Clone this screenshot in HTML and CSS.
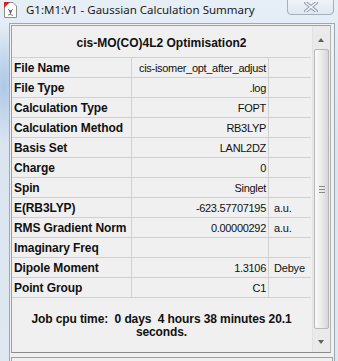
FILE: index.html
```html
<!DOCTYPE html>
<html lang="en">
<head>
    <meta charset="UTF-8">
    <meta name="viewport" content="width=device-width, initial-scale=1.0">
    <title>Gaussian Calculation Summary</title>
    <link rel="stylesheet" href="styles.css">
</head>
<body>
    <div class="window">
        <div class="titlebar">
            <svg class="app-icon" width="15" height="16" viewBox="0 0 15 16">
                <path d="M1.5 0.5 H10 L13.5 4 V15.5 H1.5 Z" fill="#fff" stroke="#8c8c8c"/>
                <path d="M1 0 H7 L1 6 Z" fill="#d42020"/>
                <path d="M5 7 L7.5 9.5 L10 7 M7.5 9.5 V12.5 M5 13 L7.5 12.5 L10 13.5" fill="none" stroke="#7a7a7a" stroke-width="1"/>
                <circle cx="7.5" cy="9.5" r="1.2" fill="#5a5a5a"/>
            </svg>
            <span class="title">G1:M1:V1 - Gaussian Calculation Summary</span>
            <div class="close">
                <svg width="14" height="10" viewBox="0 0 14 10">
                    <path d="M2 1 L12 9 M12 1 L2 9" stroke="#8d99a8" stroke-width="3.4" stroke-linecap="square"/>
                    <path d="M2 1 L12 9 M12 1 L2 9" stroke="#f4f7fa" stroke-width="1.6" stroke-linecap="square"/>
                </svg>
            </div>
        </div>

        <div class="client">
            <div class="panel">
                <div class="sheet">
                    <div class="sheet-title">cis-MO(CO)4L2 Optimisation2</div>
                    <div class="grid">
                        <div class="label">File Name</div>
                        <div class="value">cis-isomer_opt_after_adjust</div>
                        <div class="unit"></div>

                        <div class="label">File Type</div>
                        <div class="value">.log</div>
                        <div class="unit"></div>

                        <div class="label">Calculation Type</div>
                        <div class="value">FOPT</div>
                        <div class="unit"></div>

                        <div class="label">Calculation Method</div>
                        <div class="value">RB3LYP</div>
                        <div class="unit"></div>

                        <div class="label">Basis Set</div>
                        <div class="value">LANL2DZ</div>
                        <div class="unit"></div>

                        <div class="label">Charge</div>
                        <div class="value">0</div>
                        <div class="unit"></div>

                        <div class="label">Spin</div>
                        <div class="value">Singlet</div>
                        <div class="unit"></div>

                        <div class="label">E(RB3LYP)</div>
                        <div class="value">-623.57707195</div>
                        <div class="unit">a.u.</div>

                        <div class="label">RMS Gradient Norm</div>
                        <div class="value">0.00000292</div>
                        <div class="unit">a.u.</div>

                        <div class="label">Imaginary Freq</div>
                        <div class="value"></div>
                        <div class="unit"></div>

                        <div class="label">Dipole Moment</div>
                        <div class="value">1.3106</div>
                        <div class="unit">Debye</div>

                        <div class="label">Point Group</div>
                        <div class="value">C1</div>
                        <div class="unit"></div>
                    </div>
                    <div class="cpu">Job cpu time:&nbsp; 0 days&nbsp; 4 hours 38 minutes 20.1<br>seconds.</div>
                </div>

                <div class="scrollbar">
                    <div class="arrow up"></div>
                    <div class="thumb"><span class="grip"></span></div>
                    <div class="arrow down"></div>
                </div>
            </div>
            <div class="panel-next"></div>
        </div>
    </div>
</body>
</html>
```

FILE: styles.css
```css
body {
    margin: 0;
    width: 338px;
    height: 361px;
    overflow: hidden;
    font-family: "Liberation Sans", Arial, sans-serif;
}
.window {
    height: 361px;
    background:
        radial-gradient(ellipse 22px 60px at 4px 85px, rgba(150, 185, 225, 0.7), rgba(150, 185, 225, 0)),
        linear-gradient(to bottom, #e6eef6 0%, #dae5f0 40%, #dfe8f1 100%);
}
.titlebar {
    height: 23px;
    display: flex;
    align-items: flex-start;
}
.app-icon {
    margin: 2px 0 0 3px;
}
.title {
    margin: 2px 0 0 8px;
    font-family: "Noto Sans", "Open Sans", sans-serif;
    font-size: 11.5px;
    line-height: 16px;
    color: #1b1b1b;
}
.close {
    margin-left: auto;
    margin-right: 4px;
    width: 45px;
    height: 14px;
    margin-top: -1px;
    border: 1px solid #a3afbd;
    border-radius: 0 0 4px 4px;
    background: linear-gradient(to bottom, #eef3f8, #dfe7ef);
    display: flex;
    align-items: center;
    justify-content: center;
}
.client {
    margin-left: 9px;
    width: 322px;
    height: 338px;
    border: 1px solid #9ea7b2;
    border-bottom: none;
    background: #f0f0f0;
    padding: 1px;
}
.panel {
    display: flex;
    height: 326px;
    border: 1px solid #a0a0a0;
    border-right-color: #b4b4b4;
    border-bottom-color: #8c8c8c;
    background: #f0f0f0;
    width: 318px;
}
.sheet {
    width: 299px;
}
.sheet-title {
    height: 32px;
    line-height: 34px;
    text-align: center;
    font-weight: bold;
    font-size: 12px;
    color: #111;
    border-bottom: 1px solid #d0d0d0;
    box-sizing: border-box;
}
.grid {
    display: grid;
    grid-template-columns: 120px 137px 1fr;
    font-size: 11px;
    color: #111;
}
.grid > div {
    height: 20px;
    line-height: 20px;
    box-sizing: border-box;
    border-bottom: 1px solid #d0d0d0;
    white-space: nowrap;
    overflow: hidden;
}
.label {
    padding-left: 2px;
    font-weight: bold;
    font-size: 12px;
    letter-spacing: -0.1px;
    border-right: 1px solid #d0d0d0;
}
.value {
    text-align: right;
    padding-right: 2px;
    letter-spacing: -0.3px;
    border-right: 1px solid #d0d0d0;
}
.unit {
    padding-left: 5px;
    letter-spacing: -0.2px;
}
.cpu {
    padding-top: 15px;
    text-align: center;
    font-weight: bold;
    font-size: 12px;
    line-height: 13px;
    letter-spacing: -0.1px;
    color: #111;
}
.scrollbar {
    width: 17px;
    margin-left: 1px;
    border-left: 1px solid #e2e2e2;
    display: flex;
    flex-direction: column;
    align-items: center;
    background: #eaeaea;
}
.arrow {
    height: 22px;
    width: 15px;
    position: relative;
}
.arrow::after {
    content: "";
    position: absolute;
    left: 4px;
    border-left: 3.5px solid transparent;
    border-right: 3.5px solid transparent;
}
.arrow.up::after {
    top: 12px;
    border-bottom: 4px solid #606060;
}
.arrow.down::after {
    top: 10px;
    border-top: 4px solid #606060;
}
.thumb {
    flex: 1;
    width: 15px;
    box-sizing: border-box;
    border: 1px solid #b8b8b8;
    border-radius: 2px;
    background: linear-gradient(to right, #fafafa, #e8e8e8 60%, #d6d6d6);
    display: flex;
    align-items: center;
    justify-content: center;
    margin: 1px 0;
}
.grip {
    width: 6px;
    height: 5px;
    border-top: 1px solid #8a8a8a;
    border-bottom: 1px solid #8a8a8a;
    position: relative;
}
.grip::after {
    content: "";
    position: absolute;
    left: 0;
    right: 0;
    top: 2px;
    border-top: 1px solid #8a8a8a;
}
.panel-next {
    margin-top: 4px;
    height: 10px;
    border: 1px solid #a0a0a0;
    border-bottom: none;
}
```
